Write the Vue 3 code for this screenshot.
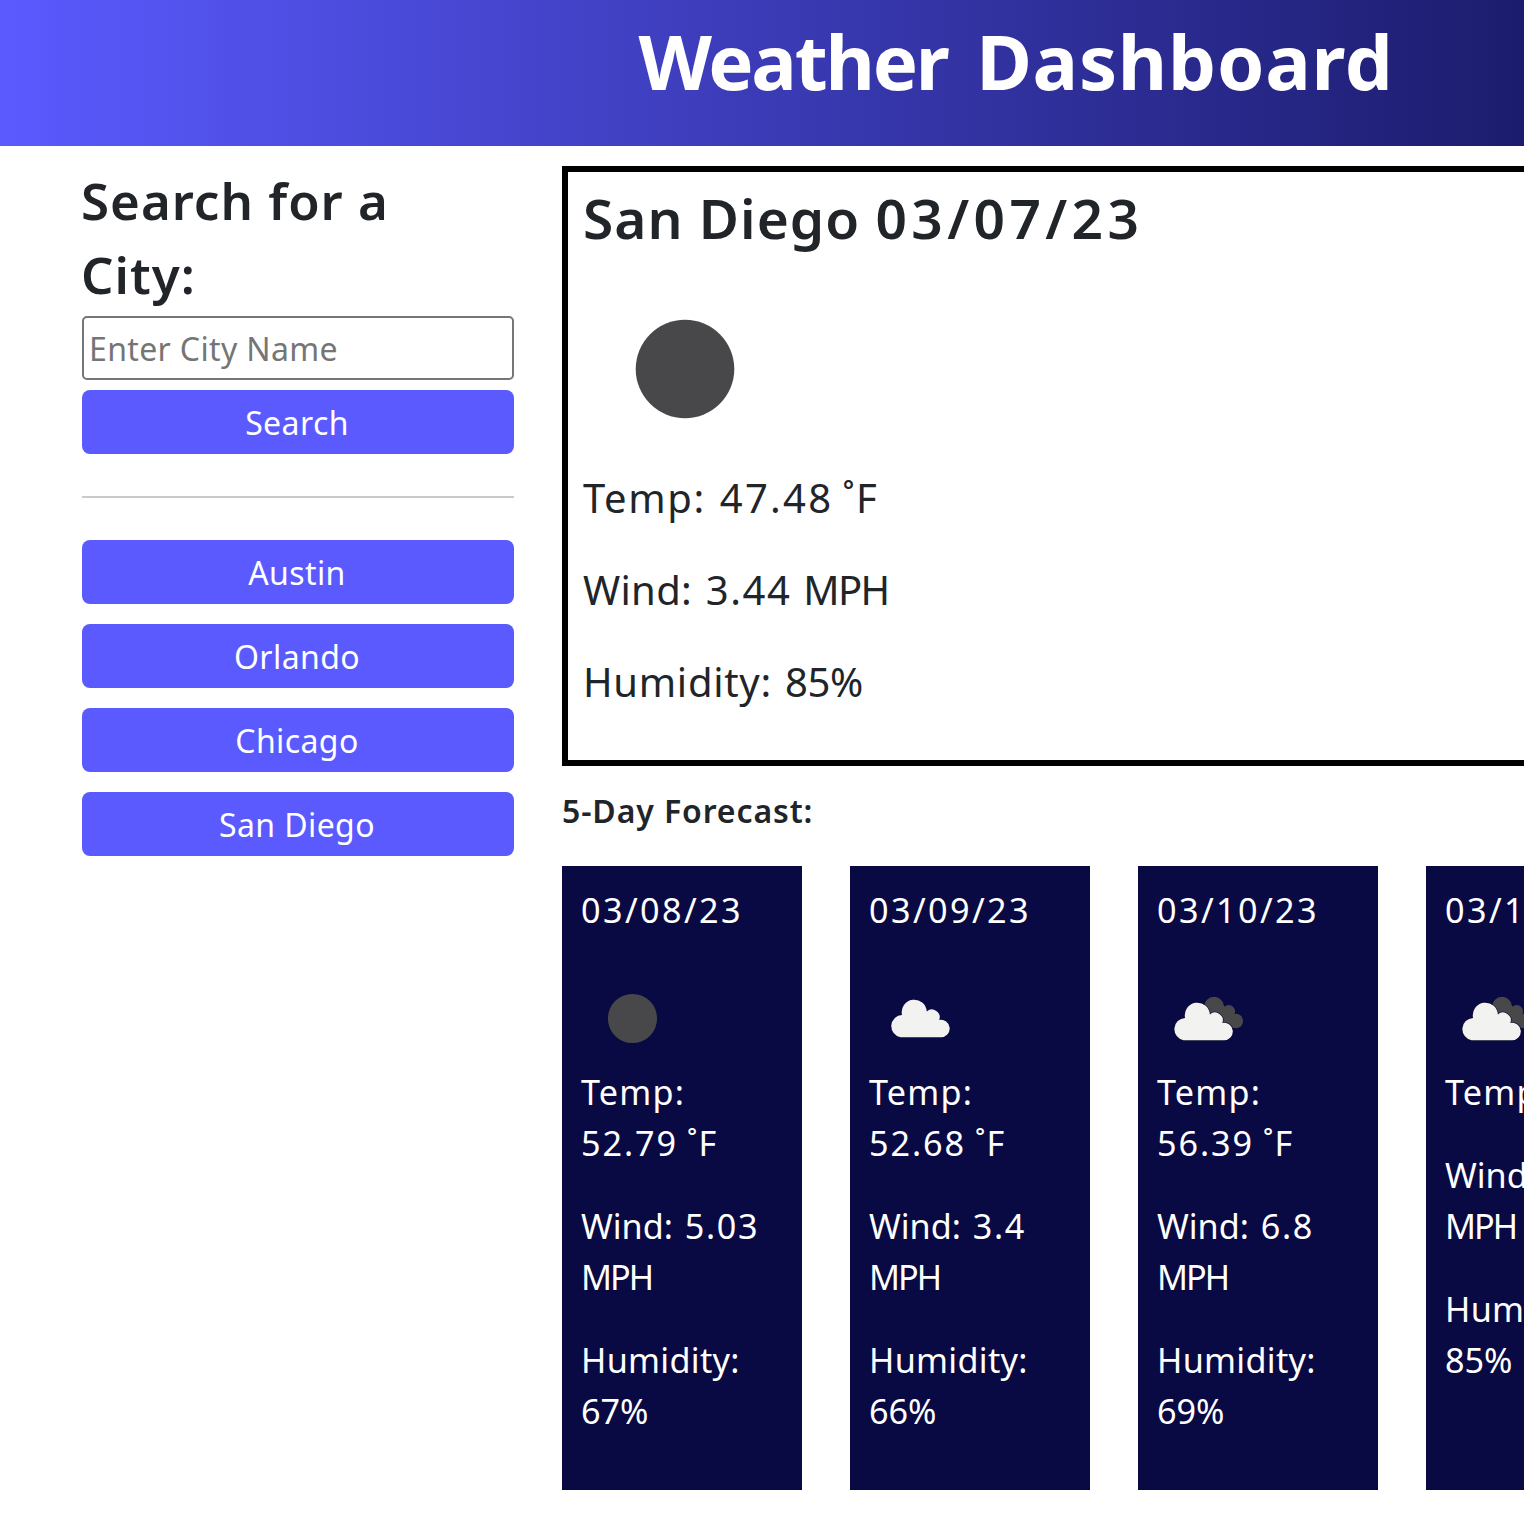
<script setup>
const cities = ['Austin', 'Orlando', 'Chicago', 'San Diego']
const days = [
  { date: '03/08/23', icon: 'clear', temp: '52.79', wind: '5.03', humidity: 67 },
  { date: '03/09/23', icon: 'cloud', temp: '52.68', wind: '3.4', humidity: 66 },
  { date: '03/10/23', icon: 'broken', temp: '56.39', wind: '6.8', humidity: 69 },
  { date: '03/11/23', icon: 'broken', temp: '57', wind: '9.17', humidity: 85 },
]
</script>

<template>
  <div class="viewport">
    <div class="page">
      <header class="banner"><h1>Weather <span>Dashboard</span></h1></header>
      <div class="columns">
        <aside class="sidebar">
          <h2>Search for a City:</h2>
          <input class="field" type="text" placeholder="Enter City Name" />
          <button class="btn search">Search</button>
          <hr />
          <div class="history">
            <button v-for="c in cities" :key="c" class="btn">{{ c }}</button>
          </div>
        </aside>
        <main class="main">
          <section class="today">
            <h2>San Diego <span class="day">03/07/23</span></h2>
            <svg class="today-icon" viewBox="0 0 200 200"><circle cx="102" cy="101" r="49.3" fill="#48484a" /></svg>
            <p class="t">Temp: <span class="val">47.48</span> ˚F</p>
            <p class="w">Wind: <span class="val">3.44</span> <span class="unit">MPH</span></p>
            <p class="h">Humidity: <span class="val">85%</span></p>
          </section>
          <h3>5-Day Forecast:</h3>
          <div class="forecast">
            <article v-for="d in days" :key="d.date" class="card">
              <p class="date">{{ d.date }}</p>
              <svg class="icon" viewBox="0 0 100 100">
                <circle v-if="d.icon === 'clear'" cx="50.5" cy="50.5" r="24.6" fill="#48484a" />
                <path
                  v-else-if="d.icon === 'cloud'"
                  transform="translate(-2.2 -0.8) scale(1.02)"
                  d="M32 68.6A11 11 0 0 1 33.5 46.8A12.3 12.3 0 1 1 57.8 43.5A7.6 7.6 0 0 1 70 51.8A8.5 8.5 0 1 1 71.5 68.6Z"
                  fill="#f2f2f0"
                />
                <g v-else>
                  <g fill="#48484a">
                    <circle cx="56" cy="38.7" r="9.9" />
                    <circle cx="70.8" cy="43.4" r="6.3" />
                    <circle cx="77.8" cy="53" r="7.3" />
                    <path d="M52 40L64 36L71 42L78 50L76 60L60 60Z" />
                  </g>
                  <path
                    transform="translate(-2 -0.8) scale(1.02)"
                    d="M27 71.5A11 11 0 0 1 28.5 49.7A12.3 12.3 0 1 1 52.8 46.4A7.6 7.6 0 0 1 65 54.7A8.5 8.5 0 1 1 66.5 71.5Z"
                    fill="#f2f2f0"
                    stroke="#0d0d30"
                    stroke-opacity="0.75"
                    stroke-width="1.6"
                    paint-order="stroke"
                  />
                </g>
              </svg>
              <p class="t">Temp: <span class="val">{{ d.temp }}</span> ˚F</p>
              <p class="w">Wind: <span class="val">{{ d.wind }}</span> <span class="unit">MPH</span></p>
              <p class="h">Humidity: <span class="val">{{ d.humidity }}%</span></p>
            </article>
          </div>
        </main>
      </div>
    </div>
  </div>
</template>

<style>
body { margin: 0; background: #fff; }
</style>

<style scoped>
.viewport { width: 100%; height: 1524px; overflow: hidden; }
.page {
  width: 2032px;
  height: 1524px;
  color: #212529;
  font-family: "Noto Sans", "Open Sans", sans-serif;
}
h1, h2, h3, p { margin: 0; }
h1, h2, h3 { font-weight: 600; }
.banner {
  height: 146px;
  background: linear-gradient(90deg, #5a5aff 0%, #1c1c6e 75%, #090943 100%);
  color: #fff;
  text-align: center;
}
.banner h1 { font-size: 76px; font-weight: 700; line-height: 122px; letter-spacing: -2.2px; word-spacing: 11px; }
.banner span { letter-spacing: 0.8px; }
.columns { display: flex; padding: 20px 0 0 82px; }
.sidebar { width: 432px; margin-right: 48px; flex: none; }
.sidebar h2 {
  box-sizing: border-box;
  height: 150px;
  margin: -3px 0 3px -1px;
  font-size: 51px;
  line-height: 74px;
  letter-spacing: 1px;
}
.field {
  display: block;
  box-sizing: border-box;
  width: 100%;
  height: 64px;
  padding: 2px 5px;
  border: 2px solid #767676;
  border-radius: 5px;
  font: 32px/1.4 "Noto Sans", sans-serif;
  letter-spacing: 0.35px;
}
.field::placeholder { color: #757575; opacity: 1; }
.btn {
  display: block;
  width: 100%;
  height: 64px;
  padding: 1px 2px 0 0;
  border: 0;
  border-radius: 8px;
  background: #5a5aff;
  color: #fff;
  font: 32px/63px "Noto Sans", sans-serif;
  letter-spacing: 0.4px;
}
.search { margin-top: 10px; }
hr { height: 2px; margin: 42px 0; border: 0; background: #c8c9ca; }
.history { display: grid; gap: 20px; }
.main { flex: 1; }
.today {
  box-sizing: border-box;
  width: 1400px;
  height: 600px;
  padding: 9px 15px;
  border: 6px solid #000;
  font-size: 40px;
  line-height: 60px;
}
.today h2 { font-size: 55px; line-height: 73px; letter-spacing: 1px; }
.today .day { letter-spacing: 4.4px; }
.today-icon { display: block; width: 200px; height: 200px; margin: 14px 0 0; }
.today p { margin-bottom: 32px; }
.today .t { letter-spacing: 1.6px; }
.today .t .val { letter-spacing: 2.3px; margin: 0 -3px 0 2px; }
.today .w { letter-spacing: 0.3px; }
.today .w .val { letter-spacing: 1.6px; margin: 0 1px 0 3px; }
.today .w .unit { letter-spacing: -1.6px; }
.today .h { letter-spacing: 0.7px; }
.today .h .val { letter-spacing: -0.4px; margin-left: 2px; }
h3 { font-size: 32px; line-height: 48px; margin: 21px 0 31px; letter-spacing: 0.9px; }
.forecast { display: flex; gap: 48px; }
.card {
  flex: none;
  box-sizing: border-box;
  width: 240px;
  height: 624px;
  padding: 18px 20px 0 19px;
  background: #090943;
  color: #fff;
  font-size: 34.2px;
  line-height: 51.2px;
}
.card p { margin-bottom: 31.6px; }
.card .date { margin: 0; letter-spacing: 2.4px; }
.card .t { letter-spacing: 1.2px; }
.card .t .val { letter-spacing: 1.9px; margin-right: -1px; }
.card .w { letter-spacing: 0; }
.card .w .val { letter-spacing: 1.6px; margin-left: 3px; }
.card .w .unit { letter-spacing: -2px; }
.card .h { letter-spacing: 0.3px; }
.card .h .val { letter-spacing: 0; }
.icon { display: block; width: 100px; height: 100px; margin: 33px 0 -2px 1px; }
</style>
